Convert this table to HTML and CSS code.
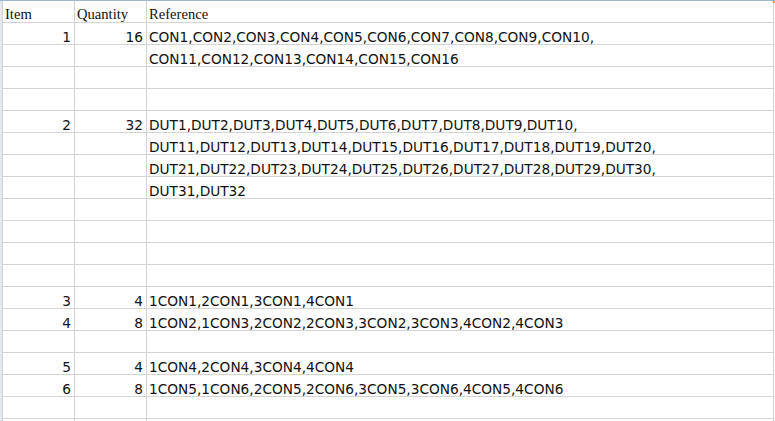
FILE: index.html
```html
<!DOCTYPE html>
<html>
<head>
<meta charset="utf-8">
<link rel="stylesheet" href="styles.css">
</head>
<body>
<div class="page">
  <div class="corner"></div>
  <div class="sheet">
    <div class="cell head">Item</div><div class="cell head">Quantity</div><div class="cell head">Reference</div>
    <div class="cell num">1</div><div class="cell num">16</div><div class="cell ref">CON1,CON2,CON3,CON4,CON5,CON6,CON7,CON8,CON9,CON10,</div>
    <div class="cell"></div><div class="cell"></div><div class="cell ref">CON11,CON12,CON13,CON14,CON15,CON16</div>
    <div class="cell"></div><div class="cell"></div><div class="cell"></div>
    <div class="cell"></div><div class="cell"></div><div class="cell"></div>
    <div class="cell num">2</div><div class="cell num">32</div><div class="cell ref">DUT1,DUT2,DUT3,DUT4,DUT5,DUT6,DUT7,DUT8,DUT9,DUT10,</div>
    <div class="cell"></div><div class="cell"></div><div class="cell ref">DUT11,DUT12,DUT13,DUT14,DUT15,DUT16,DUT17,DUT18,DUT19,DUT20,</div>
    <div class="cell"></div><div class="cell"></div><div class="cell ref">DUT21,DUT22,DUT23,DUT24,DUT25,DUT26,DUT27,DUT28,DUT29,DUT30,</div>
    <div class="cell"></div><div class="cell"></div><div class="cell ref">DUT31,DUT32</div>
    <div class="cell"></div><div class="cell"></div><div class="cell"></div>
    <div class="cell"></div><div class="cell"></div><div class="cell"></div>
    <div class="cell"></div><div class="cell"></div><div class="cell"></div>
    <div class="cell"></div><div class="cell"></div><div class="cell"></div>
    <div class="cell num">3</div><div class="cell num">4</div><div class="cell ref">1CON1,2CON1,3CON1,4CON1</div>
    <div class="cell num">4</div><div class="cell num">8</div><div class="cell ref">1CON2,1CON3,2CON2,2CON3,3CON2,3CON3,4CON2,4CON3</div>
    <div class="cell"></div><div class="cell"></div><div class="cell"></div>
    <div class="cell num">5</div><div class="cell num">4</div><div class="cell ref">1CON4,2CON4,3CON4,4CON4</div>
    <div class="cell num">6</div><div class="cell num">8</div><div class="cell ref">1CON5,1CON6,2CON5,2CON6,3CON5,3CON6,4CON5,4CON6</div>
    <div class="cell"></div><div class="cell"></div><div class="cell"></div>
    <div class="cell"></div><div class="cell"></div><div class="cell"></div>
  </div>
</div>
</body>
</html>
```

FILE: styles.css
```css
html, body {
  margin: 0;
  padding: 0;
  background: #ffffff;
}
body {
  width: 775px;
  height: 421px;
  overflow: hidden;
}
.page {
  position: relative;
  width: 775px;
  height: 421px;
  overflow: hidden;
  background: #ffffff;
  border-top: 1px solid #9eb6ce;
  box-sizing: border-box;
  display: flex;
}
.corner {
  position: absolute;
  top: -1px;
  left: 773px;
  width: 2px;
  height: 3px;
  background: #f29436;
}
.sheet {
  margin-left: 2px;
  border-left: 1px solid #d4d4d4;
  display: grid;
  grid-template-columns: 72px 72px 627px;
  grid-auto-rows: 22px;
  align-content: start;
  background: #ffffff;
  box-shadow: -2px 0 0 #e3e8ef;
}
.cell {
  box-sizing: border-box;
  border-right: 1px solid #d4d4d4;
  border-bottom: 1px solid #d4d4d4;
  display: flex;
  align-items: flex-end;
  padding: 0 2px 0 2px;
  font-family: "DejaVu Sans", sans-serif;
  font-size: 13.7px;
  line-height: 14px;
  color: #111111;
  white-space: nowrap;
  overflow: visible;
}
.head {
  height: 22px;
  font-family: "Liberation Serif", serif;
  font-size: 14.6px;
  line-height: 15px;
  padding-left: 2px;
}
.num {
  justify-content: flex-end;
  padding-right: 3px;
}
.ref {
  padding-left: 2px;
}
```
